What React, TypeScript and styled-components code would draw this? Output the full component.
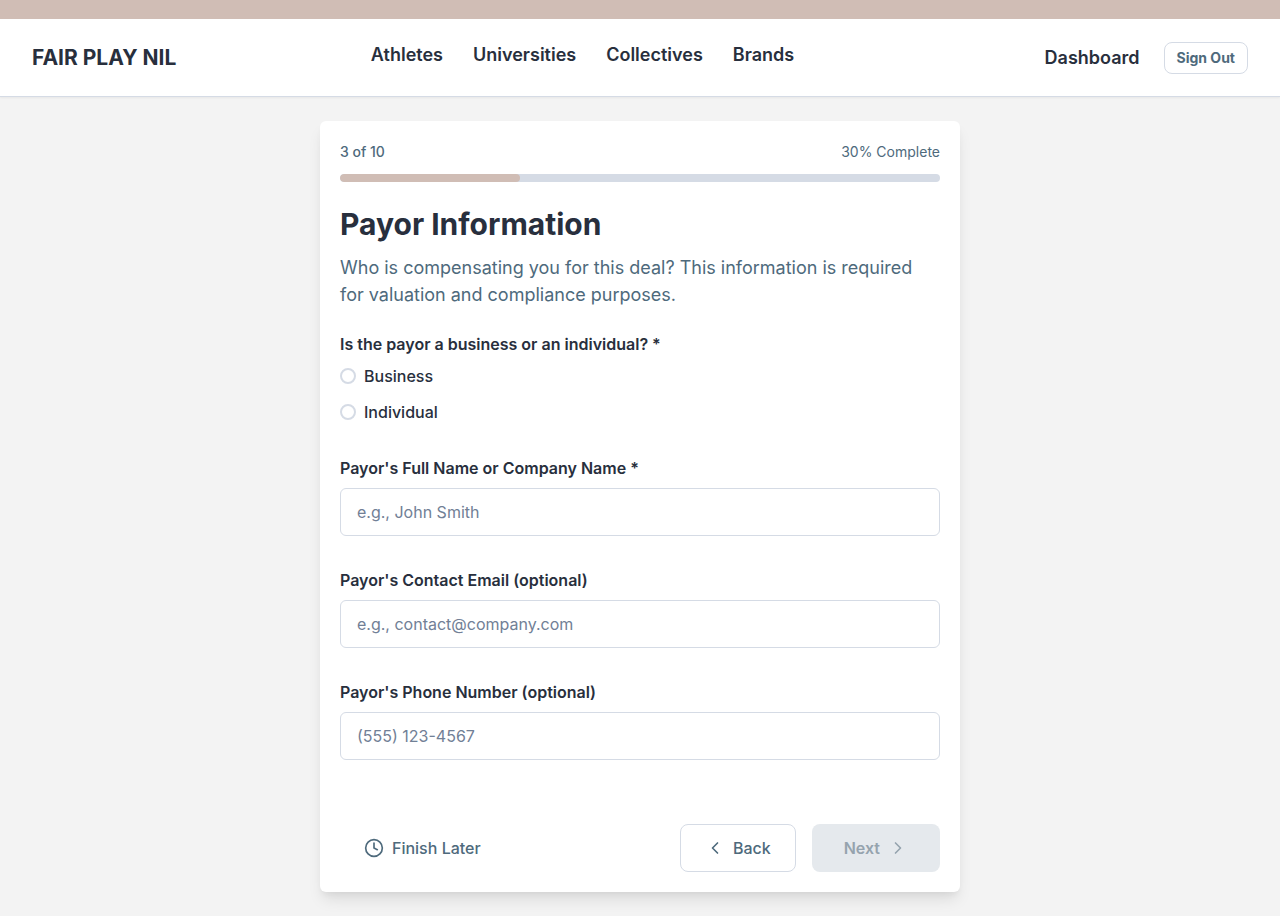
import React, { useState } from "react";
import styled, { createGlobalStyle } from "styled-components";
import { ChevronLeft, ChevronRight, Clock } from "lucide-react";

const color = {
  ink: "#282f3d",
  slate: "#4e6a7c",
  line: "#d5dbe5",
  blush: "#d0bdb5",
  page: "#f3f3f3",
  placeholder: "#718096",
};

const GlobalStyle = createGlobalStyle`
  *, *::before, *::after { box-sizing: border-box; }
  body {
    margin: 0;
    background: ${color.page};
    color: ${color.ink};
    font-family: Inter, "Liberation Sans", sans-serif;
    font-size: 16px;
    line-height: 24px;
  }
  h1, p, fieldset, legend { margin: 0; padding: 0; border: 0; }
  button, input { font: inherit; }
`;

const Banner = styled.div`
  height: 19px;
  background: ${color.blush};
`;

const Header = styled.header`
  display: flex;
  align-items: center;
  min-height: 78px;
  padding: 0 32px;
  background: #fff;
  border-bottom: 1px solid ${color.line};
  box-shadow: 0 1px 2px rgba(0, 0, 0, 0.05);
`;

const Brand = styled.a`
  color: ${color.ink};
  font-size: 21px;
  font-weight: 700;
  text-decoration: none;
`;

const Nav = styled.nav`
  display: flex;
  flex: 1;
  justify-content: center;
  gap: 30px;
  padding-bottom: 5px;
`;

const NavLink = styled.a`
  color: ${color.ink};
  font-size: 18px;
  font-weight: 600;
  text-decoration: none;
`;

const Account = styled.div`
  display: flex;
  align-items: center;
  gap: 24px;
  margin-left: 56px;
`;

const SignOut = styled.button`
  height: 32px;
  padding: 0 12px;
  border: 1px solid ${color.line};
  border-radius: 8px;
  background: #fff;
  color: ${color.slate};
  font-size: 14px;
  font-weight: 700;
  line-height: 20px;
`;

const Main = styled.main`
  padding: 24px;
`;

const Card = styled.form`
  max-width: 640px;
  margin: 0 auto;
  padding: 20px;
  border-radius: 6px;
  background: #fff;
  box-shadow: 0 10px 15px -3px rgba(0, 0, 0, 0.1), 0 4px 6px -2px rgba(0, 0, 0, 0.05);
`;

const ProgressText = styled.div`
  display: flex;
  justify-content: space-between;
  margin-bottom: 12px;
  color: ${color.slate};
  font-size: 14px;
  line-height: 21px;
`;

const Step = styled.span`
  font-weight: 500;
`;

const Track = styled.div`
  height: 8px;
  border-radius: 4px;
  overflow: hidden;
  background: ${color.line};
`;

const Fill = styled.div`
  height: 100%;
  border-radius: 4px;
  background: ${color.blush};
`;

const Title = styled.h1`
  margin-top: 24px;
  font-size: 30px;
  font-weight: 700;
  line-height: 36px;
`;

const Intro = styled.p`
  margin: 12px 0 24px;
  color: ${color.slate};
  font-size: 18px;
  line-height: 27px;
`;

const Fields = styled.div`
  display: flex;
  flex-direction: column;
  gap: 32px;
`;

const Legend = styled.legend`
  margin-bottom: 8px;
  font-weight: 600;
`;

const Options = styled.div`
  display: flex;
  flex-direction: column;
  gap: 12px;
`;

const Option = styled.label`
  display: flex;
  align-items: center;
  gap: 8px;
  font-weight: 500;
`;

const Radio = styled.input`
  appearance: none;
  width: 16px;
  height: 16px;
  margin: 0;
  border: 2px solid ${color.line};
  border-radius: 50%;
  background: #fff;
  &:checked { border: 5px solid ${color.slate}; }
`;

const Field = styled.div`
  display: flex;
  flex-direction: column;
  gap: 8px;
`;

const Label = styled.label`
  font-weight: 600;
`;

const TextInput = styled.input`
  width: 100%;
  height: 48px;
  padding: 0 16px;
  border: 1px solid ${color.line};
  border-radius: 6px;
  background: #fff;
  color: ${color.ink};
  &::placeholder { color: ${color.placeholder}; opacity: 1; }
`;

const Actions = styled.div`
  display: flex;
  align-items: center;
  justify-content: space-between;
  margin-top: 64px;
`;

const Steps = styled.div`
  display: flex;
  gap: 16px;
`;

const Button = styled.button<{ $kind: "ghost" | "outline" | "solid" }>`
  display: flex;
  align-items: center;
  gap: 8px;
  height: 48px;
  padding: 0 ${(p) => (p.$kind === "solid" ? 32 : 24)}px;
  border: ${(p) => (p.$kind === "outline" ? `1px solid ${color.line}` : "0")};
  border-radius: 8px;
  background: ${(p) => (p.$kind === "solid" ? "#e5e9ed" : "#fff")};
  color: ${(p) => (p.$kind === "solid" ? "#95a3ae" : color.slate)};
  font-weight: ${(p) => (p.$kind === "solid" ? 600 : 500)};
`;

const links = ["Athletes", "Universities", "Collectives", "Brands"];

const fields = [
  { id: "payor-name", label: "Payor's Full Name or Company Name *", hint: "e.g., John Smith", type: "text" },
  { id: "payor-email", label: "Payor's Contact Email (optional)", hint: "e.g., contact@company.com", type: "email" },
  { id: "payor-phone", label: "Payor's Phone Number (optional)", hint: "(555) 123-4567", type: "tel" },
];

export default function App() {
  const [payor, setPayor] = useState("");
  const percent = 30;

  return (
    <>
      <GlobalStyle />
      <Banner />
      <Header>
        <Brand href="#">FAIR PLAY NIL</Brand>
        <Nav>
          {links.map((name) => (
            <NavLink key={name} href="#">{name}</NavLink>
          ))}
        </Nav>
        <Account>
          <NavLink href="#">Dashboard</NavLink>
          <SignOut type="button">Sign Out</SignOut>
        </Account>
      </Header>
      <Main>
        <Card>
          <ProgressText>
            <Step>3 of 10</Step>
            <span>{percent}% Complete</span>
          </ProgressText>
          <Track>
            <Fill style={{ width: `${percent}%` }} />
          </Track>
          <Title>Payor Information</Title>
          <Intro>
            Who is compensating you for this deal? This information is required for valuation and
            compliance purposes.
          </Intro>
          <Fields>
            <fieldset>
              <Legend>Is the payor a business or an individual? *</Legend>
              <Options>
                {["Business", "Individual"].map((kind) => (
                  <Option key={kind}>
                    <Radio
                      type="radio"
                      name="payor-kind"
                      checked={payor === kind}
                      onChange={() => setPayor(kind)}
                    />
                    {kind}
                  </Option>
                ))}
              </Options>
            </fieldset>
            {fields.map((f) => (
              <Field key={f.id}>
                <Label htmlFor={f.id}>{f.label}</Label>
                <TextInput id={f.id} type={f.type} placeholder={f.hint} />
              </Field>
            ))}
          </Fields>
          <Actions>
            <Button type="button" $kind="ghost">
              <Clock size={20} />
              Finish Later
            </Button>
            <Steps>
              <Button type="button" $kind="outline">
                <ChevronLeft size={20} />
                Back
              </Button>
              <Button type="button" $kind="solid" disabled>
                Next
                <ChevronRight size={20} />
              </Button>
            </Steps>
          </Actions>
        </Card>
      </Main>
    </>
  );
}
